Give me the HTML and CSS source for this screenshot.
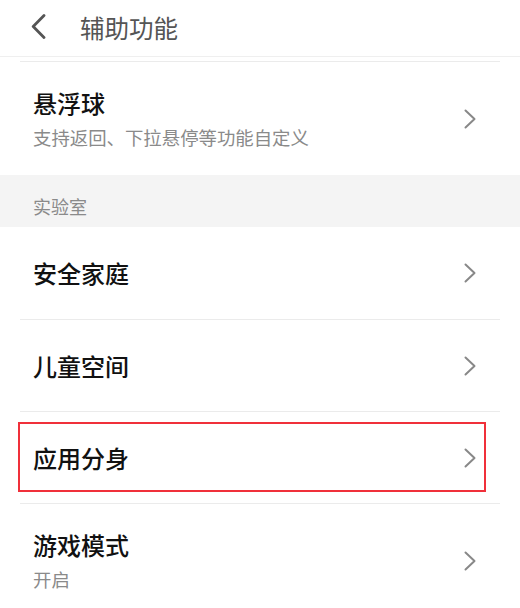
FILE: index.html
```html
<!DOCTYPE html>
<html lang="zh-CN">
<head>
<meta charset="utf-8">
<title>辅助功能</title>
<link rel="stylesheet" href="styles.css">
</head>
<body>
<div class="page">
  <header class="header">
    <svg class="back" width="15" height="25" viewBox="0 0 15 25"><path d="M13 1.5 L2.2 12.5 L13 23.5" fill="none" stroke="#555" stroke-width="2.8" stroke-linecap="round" stroke-linejoin="round"/></svg>
    <h1 class="header-title">辅助功能</h1>
  </header>
  <div class="topline"></div>
  <div class="row row-tall row-first">
    <div class="text">
      <div class="title">悬浮球</div>
      <div class="sub">支持返回、下拉悬停等功能自定义</div>
    </div>
    <svg class="chev" width="12" height="20" viewBox="0 0 12 20"><path d="M1.5 1.5 L10.5 10 L1.5 18.5" fill="none" stroke="#888" stroke-width="2" stroke-linecap="round" stroke-linejoin="round"/></svg>
  </div>
  <div class="section">实验室</div>
  <div class="row row-first">
    <div class="text"><div class="title">安全家庭</div></div>
    <svg class="chev" width="12" height="20" viewBox="0 0 12 20"><path d="M1.5 1.5 L10.5 10 L1.5 18.5" fill="none" stroke="#888" stroke-width="2" stroke-linecap="round" stroke-linejoin="round"/></svg>
  </div>
  <div class="row">
    <div class="text"><div class="title">儿童空间</div></div>
    <svg class="chev" width="12" height="20" viewBox="0 0 12 20"><path d="M1.5 1.5 L10.5 10 L1.5 18.5" fill="none" stroke="#888" stroke-width="2" stroke-linecap="round" stroke-linejoin="round"/></svg>
  </div>
  <div class="row row-marked">
    <div class="text"><div class="title">应用分身</div></div>
    <svg class="chev" width="12" height="20" viewBox="0 0 12 20"><path d="M1.5 1.5 L10.5 10 L1.5 18.5" fill="none" stroke="#888" stroke-width="2" stroke-linecap="round" stroke-linejoin="round"/></svg>
    <div class="mark"></div>
  </div>
  <div class="row row-tall">
    <div class="text">
      <div class="title">游戏模式</div>
      <div class="sub">开启</div>
    </div>
    <svg class="chev" width="12" height="20" viewBox="0 0 12 20"><path d="M1.5 1.5 L10.5 10 L1.5 18.5" fill="none" stroke="#888" stroke-width="2" stroke-linecap="round" stroke-linejoin="round"/></svg>
  </div>
</div>
</body>
</html>
```

FILE: styles.css
```css
html, body {
  margin: 0;
  padding: 0;
  background: #ffffff;
}
body {
  font-family: "Noto Sans CJK SC", "Noto Sans", sans-serif;
  width: 520px;
  height: 608px;
  overflow: hidden;
}
.page {
  display: flex;
  flex-direction: column;
}
.header {
  height: 56px;
  border-bottom: 1px solid #efefef;
  display: flex;
  align-items: center;
  padding-left: 31px;
  gap: 34px;
}
.back {
  display: block;
  margin-top: -3px;
}
.header-title {
  margin: 0;
  font-size: 24.5px;
  font-weight: 400;
  color: #555555;
  line-height: 32px;
}
.topline {
  margin: 4px 20px 0;
  height: 1px;
  background: #ebebeb;
}
.row {
  position: relative;
  margin: 0 20px;
  border-top: 1px solid #ebebeb;
  height: 91px;
  display: flex;
  align-items: center;
  justify-content: space-between;
  padding: 0 24px 0 13px;
}
.row-first {
  border-top: none;
  height: 92px;
}
.row-tall {
  height: 113px;
}
.text {
  display: flex;
  flex-direction: column;
}
.title {
  font-size: 24px;
  line-height: 32px;
  font-weight: 500;
  color: #111111;
}
.sub {
  margin-top: 5px;
  font-size: 18.4px;
  line-height: 26px;
  color: #8a8a8a;
}
.chev {
  display: block;
  flex: none;
}
.section {
  height: 52px;
  box-sizing: border-box;
  padding: 18px 0 0 33px;
  background: #f4f4f4;
  font-size: 18px;
  line-height: 26px;
  color: #8a8a8a;
}
.mark {
  position: absolute;
  left: -2px;
  right: 14px;
  top: 10px;
  bottom: 11px;
  border: 2px solid #f0303a;
}
```
